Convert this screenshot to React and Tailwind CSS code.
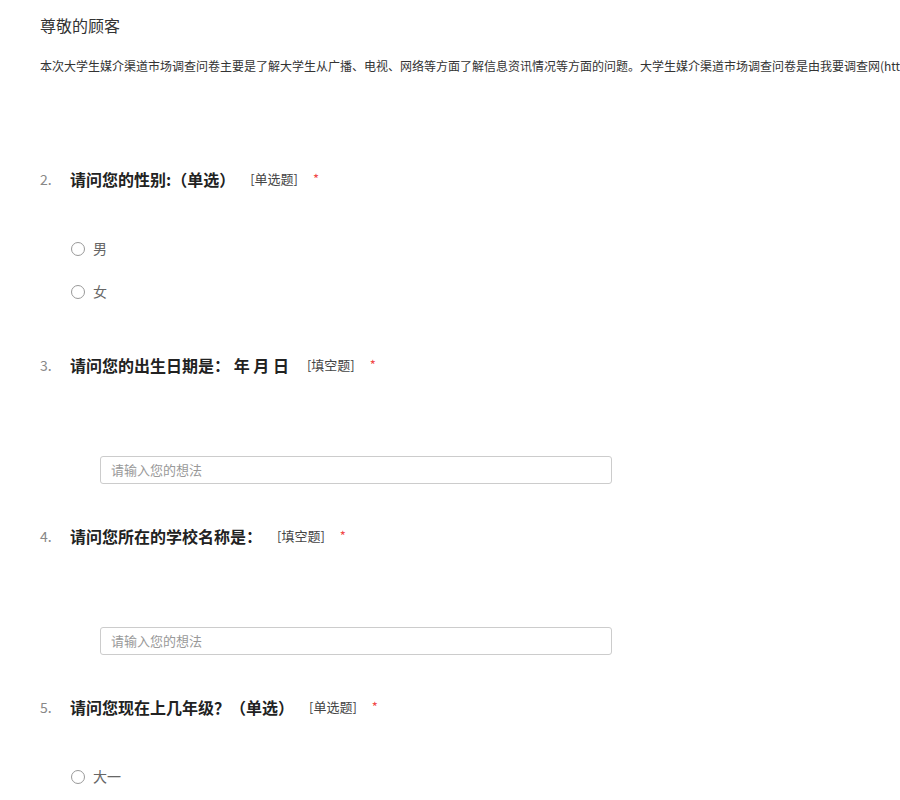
import React from "react";

function Radio({ label }) {
  return (
    <div className="flex items-center h-[43px] pl-[31px]">
      <span className="w-[14px] h-[14px] rounded-full border border-[#999] bg-white"></span>
      <span className="ml-[8px] text-[14px] text-[#666]">{label}</span>
    </div>
  );
}

function QTitle({ n, title, tag, gap = "ml-[15px]" }) {
  return (
    <div className="flex items-center h-[24px] whitespace-nowrap">
      <span className="w-[30px] text-[14px] text-[#888]">{n}.</span>
      <span className="text-[16px] font-bold text-[#222]">{title}</span>
      <span className={`${gap} text-[13px] text-[#444]`}>{tag}</span>
      <span className="ml-[15px] text-[13px] text-[#f04848]">*</span>
    </div>
  );
}

function TextInput() {
  return (
    <div className="ml-[60px] w-[512px] h-[28px] border border-[#cccccc] rounded-[3px] flex items-center px-[10px] text-[13px] text-[#999]">
      请输入您的想法
    </div>
  );
}

export default function App() {
  return (
    <div className="w-[900px] h-[800px] overflow-hidden bg-white pl-[40px] pt-[14px] font-['Noto_Sans_CJK_SC','Noto_Sans',sans-serif]">
      <div className="text-[16px] leading-[22px] text-[#333]">尊敬的顾客</div>
      <div className="mt-[21px] text-[12px] leading-[18px] whitespace-nowrap text-[#333]">
        本次大学生媒介渠道市场调查问卷主要是了解大学生从广播、电视、网络等方面了解信息资讯情况等方面的问题。大学生媒介渠道市场调查问卷是由我要调查网(htt
      </div>

      <div className="mt-[92px]">
        <QTitle n="2" title="请问您的性别:（单选）" tag="[单选题]" />
        <div className="mt-[36px]">
          <Radio label="男" />
          <Radio label="女" />
        </div>
      </div>

      <div className="mt-[40px]">
        <QTitle n="3" title="请问您的出生日期是： 年 月 日" tag="[填空题]" gap="ml-[18px]" />
        <div className="mt-[79px]">
          <TextInput />
        </div>
      </div>

      <div className="mt-[40px]">
        <QTitle n="4" title="请问您所在的学校名称是：" tag="[填空题]" />
        <div className="mt-[79px]">
          <TextInput />
        </div>
      </div>

      <div className="mt-[40px]">
        <QTitle n="5" title="请问您现在上几年级？（单选）" tag="[单选题]" />
        <div className="mt-[36px]">
          <Radio label="大一" />
        </div>
      </div>
    </div>
  );
}
